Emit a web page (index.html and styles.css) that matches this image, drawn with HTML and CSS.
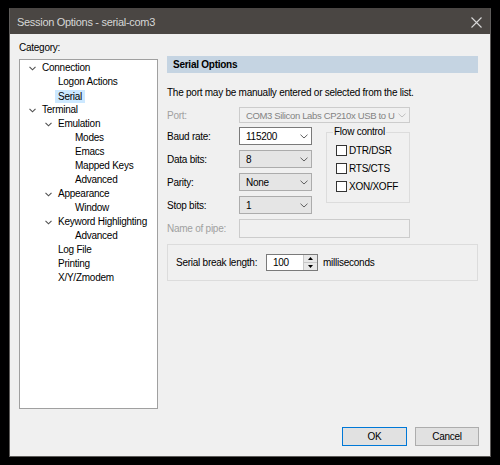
FILE: index.html
```html
<!DOCTYPE html>
<html>
<head>
<meta charset="utf-8">
<link rel="stylesheet" href="styles.css">
</head>
<body>
<div class="dialog">
  <div class="titlebar">
    <span class="title">Session Options - serial-com3</span>
    <svg class="close" width="11" height="11" viewBox="0 0 11 11"><path d="M0.5 0.5 L10.5 10.5 M10.5 0.5 L0.5 10.5" stroke="#d8d8d8" stroke-width="1.1" fill="none"/></svg>
  </div>
  <div class="client">
    <div class="main">
      <div class="left">
        <div class="cat-label">Category:</div>
        <div class="tree">
          <div class="row l0"><span class="tw"><svg width="7" height="5" viewBox="0 0 7 5"><path d="M0.5 0.8 L3.5 3.8 L6.5 0.8" stroke="#505050" stroke-width="1.1" fill="none"/></svg></span><span class="txt">Connection</span></div>
          <div class="row l1"><span class="tw"></span><span class="txt">Logon Actions</span></div>
          <div class="row l1"><span class="tw"></span><span class="txt sel">Serial</span></div>
          <div class="row l0"><span class="tw"><svg width="7" height="5" viewBox="0 0 7 5"><path d="M0.5 0.8 L3.5 3.8 L6.5 0.8" stroke="#505050" stroke-width="1.1" fill="none"/></svg></span><span class="txt">Terminal</span></div>
          <div class="row l1"><span class="tw"><svg width="7" height="5" viewBox="0 0 7 5"><path d="M0.5 0.8 L3.5 3.8 L6.5 0.8" stroke="#505050" stroke-width="1.1" fill="none"/></svg></span><span class="txt">Emulation</span></div>
          <div class="row l2"><span class="tw"></span><span class="txt">Modes</span></div>
          <div class="row l2"><span class="tw"></span><span class="txt">Emacs</span></div>
          <div class="row l2"><span class="tw"></span><span class="txt">Mapped Keys</span></div>
          <div class="row l2"><span class="tw"></span><span class="txt">Advanced</span></div>
          <div class="row l1"><span class="tw"><svg width="7" height="5" viewBox="0 0 7 5"><path d="M0.5 0.8 L3.5 3.8 L6.5 0.8" stroke="#505050" stroke-width="1.1" fill="none"/></svg></span><span class="txt">Appearance</span></div>
          <div class="row l2"><span class="tw"></span><span class="txt">Window</span></div>
          <div class="row l1"><span class="tw"><svg width="7" height="5" viewBox="0 0 7 5"><path d="M0.5 0.8 L3.5 3.8 L6.5 0.8" stroke="#505050" stroke-width="1.1" fill="none"/></svg></span><span class="txt">Keyword Highlighting</span></div>
          <div class="row l2"><span class="tw"></span><span class="txt">Advanced</span></div>
          <div class="row l1"><span class="tw"></span><span class="txt">Log File</span></div>
          <div class="row l1"><span class="tw"></span><span class="txt">Printing</span></div>
          <div class="row l1"><span class="tw"></span><span class="txt">X/Y/Zmodem</span></div>
        </div>
      </div>
      <div class="right">
        <div class="header">Serial Options</div>
        <div class="desc">The port may be manually entered or selected from the list.</div>
        <div class="frow port-row">
          <span class="flabel dis">Port:</span>
          <div class="combo disabled wide"><span class="cval">COM3 Silicon Labs CP210x USB to U</span><svg class="arrow" width="8" height="5" viewBox="0 0 8 5"><path d="M0.5 0.7 L4 4 L7.5 0.7" stroke="#c0c0c0" stroke-width="1" fill="none"/></svg></div>
        </div>
        <div class="mid">
          <div class="fields">
            <div class="frow">
              <span class="flabel">Baud rate:</span>
              <div class="combo edit"><span class="cval">115200</span><svg class="arrow" width="8" height="5" viewBox="0 0 8 5"><path d="M0.5 0.7 L4 4 L7.5 0.7" stroke="#606060" stroke-width="1" fill="none"/></svg></div>
            </div>
            <div class="frow">
              <span class="flabel">Data bits:</span>
              <div class="combo list"><span class="cval">8</span><svg class="arrow" width="8" height="5" viewBox="0 0 8 5"><path d="M0.5 0.7 L4 4 L7.5 0.7" stroke="#606060" stroke-width="1" fill="none"/></svg></div>
            </div>
            <div class="frow">
              <span class="flabel">Parity:</span>
              <div class="combo list"><span class="cval">None</span><svg class="arrow" width="8" height="5" viewBox="0 0 8 5"><path d="M0.5 0.7 L4 4 L7.5 0.7" stroke="#606060" stroke-width="1" fill="none"/></svg></div>
            </div>
            <div class="frow">
              <span class="flabel">Stop bits:</span>
              <div class="combo list"><span class="cval">1</span><svg class="arrow" width="8" height="5" viewBox="0 0 8 5"><path d="M0.5 0.7 L4 4 L7.5 0.7" stroke="#606060" stroke-width="1" fill="none"/></svg></div>
            </div>
          </div>
          <fieldset class="flow">
            <legend>Flow control</legend>
            <div class="chk"><span class="box"></span><span>DTR/DSR</span></div>
            <div class="chk"><span class="box"></span><span>RTS/CTS</span></div>
            <div class="chk"><span class="box"></span><span>XON/XOFF</span></div>
          </fieldset>
        </div>
        <div class="frow pipe-row">
          <span class="flabel dis">Name of pipe:</span>
          <div class="editbox disabled"></div>
        </div>
        <div class="break-group">
          <span class="blabel">Serial break length:</span>
          <div class="spin">
            <span class="spinval">100</span>
            <div class="spinbtns">
              <span class="sb"><svg width="5" height="3" viewBox="0 0 5 3"><path d="M0 3 L2.5 0 L5 3 Z" fill="#000"/></svg></span>
              <span class="sb"><svg width="5" height="3" viewBox="0 0 5 3"><path d="M0 0 L2.5 3 L5 0 Z" fill="#000"/></svg></span>
            </div>
          </div>
          <span class="unit">milliseconds</span>
        </div>
      </div>
    </div>
    <div class="buttons">
      <button class="btn default">OK</button>
      <button class="btn">Cancel</button>
    </div>
  </div>
</div>
</body>
</html>
```

FILE: styles.css
```css
* { box-sizing: border-box; }
html, body { margin: 0; padding: 0; background: #000; }
body {
  font-family: "Liberation Sans", Arial, sans-serif;
  font-size: 10px;
  letter-spacing: -0.25px;
  color: #000;
  width: 500px;
  height: 465px;
  overflow: hidden;
}
.dialog {
  margin: 8px 0 0 9px;
  width: 482px;
  height: 449px;
  border: 1px solid #5e5c5a;
  border-top-color: #4a4643;
  display: flex;
  flex-direction: column;
}
.titlebar {
  height: 25px;
  background: #4a4643;
  color: #d6d6d6;
  display: flex;
  align-items: center;
  justify-content: space-between;
  padding: 0 8px 0 7px;
  font-size: 11px;
  letter-spacing: -0.3px;
}
.close { margin-top: 1px; }
.client {
  flex: 1;
  background: #f0f0f0;
  display: flex;
  flex-direction: column;
}
.main {
  display: flex;
  padding: 7px 0 0 9px;
  gap: 9px;
}
.left { width: 139px; }
.cat-label { line-height: 14px; height: 14px; }
.tree {
  margin-top: 4px;
  height: 350px;
  background: #fff;
  border: 1px solid #a0a0a0;
  padding-top: 1px;
}
.row {
  display: flex;
  align-items: center;
  height: 14px;
  line-height: 14px;
  white-space: nowrap;
}
.row.l0 { padding-left: 6px; }
.row.l1 { padding-left: 22px; }
.row.l2 { padding-left: 39px; }
.tw {
  width: 16px;
  flex: none;
  display: flex;
  align-items: center;
  padding-left: 3px;
}
.txt.sel {
  background: #cce8ff;
  margin-left: -3px;
  padding: 0 3px;
  line-height: 13px;
}
.right {
  width: 311px;
  padding-top: 15px;
  display: flex;
  flex-direction: column;
}
.header {
  height: 17px;
  background: #c5d4e2;
  font-weight: bold;
  padding-left: 6px;
  line-height: 17px;
}
.desc {
  margin-top: 13px;
  line-height: 14px;
}
.frow {
  display: flex;
  align-items: center;
}
.flabel { width: 72px; flex: none; }
.dis { color: #a0a0a0; }
.port-row { margin-top: 7px; }
.combo {
  display: flex;
  align-items: center;
  justify-content: space-between;
  height: 18px;
  width: 73px;
  padding: 0 3px 0 6px;
  border: 1px solid #acacac;
}
.combo.wide {
  width: 171px;
  height: 16px;
  font-size: 9.5px;
  letter-spacing: -0.35px;
  padding-left: 6px;
}
.combo.disabled { background: #f0f0f0; border-color: #cccccc; color: #838383; }
.combo.edit { background: #fff; border-color: #7a7a7a; }
.combo.list { background: #e5e5e5; border-color: #acacac; }
.cval { white-space: nowrap; flex: 1; min-width: 0; overflow: hidden; }
.arrow { flex: none; margin-left: 2px; }
.mid {
  display: flex;
  align-items: flex-start;
  margin-top: 4px;
}
.fields {
  display: flex;
  flex-direction: column;
  gap: 5px;
}
.flow {
  margin: -2px 0 0 14px;
  width: 84px;
  height: 78px;
  padding: 2px 0 0 9px;
  border: 1px solid #dcdcdc;
  min-width: 0;
}
.flow legend {
  padding: 0 1px;
  margin-left: -3px;
  line-height: 14px;
}
.chk {
  display: flex;
  align-items: center;
  gap: 2px;
  height: 18px;
}
.box {
  width: 11px;
  height: 11px;
  border: 1px solid #333;
  background: #fff;
}
.pipe-row { margin-top: 5px; }
.editbox {
  width: 171px;
  height: 19px;
  border: 1px solid #cccccc;
}
.editbox.disabled { background: #f0f0f0; }
.break-group {
  margin-top: 6px;
  height: 37px;
  border: 1px solid #dcdcdc;
  display: flex;
  align-items: center;
  padding-left: 8px;
}
.blabel { width: 90px; }
.spin {
  display: flex;
  width: 52px;
  height: 17px;
  border: 1px solid #7a7a7a;
  background: #fff;
}
.spinval { flex: 1; padding-left: 6px; line-height: 15px; }
.spinbtns {
  width: 14px;
  display: flex;
  flex-direction: column;
  border-left: 1px solid #c8c8c8;
}
.sb {
  flex: 1;
  display: flex;
  align-items: center;
  justify-content: center;
  background: #e8e8e8;
}
.sb + .sb { border-top: 1px solid #c8c8c8; }
.unit { margin-left: 5px; }
.buttons {
  margin-top: auto;
  display: flex;
  justify-content: flex-end;
  gap: 8px;
  padding: 0 11px 10px 0;
}
.btn {
  font-family: "Liberation Sans", Arial, sans-serif;
  font-size: 10px;
  letter-spacing: -0.25px;
  height: 19px;
  width: 64px;
  background: #e1e1e1;
  border: 1px solid #adadad;
  padding: 0;
  color: #000;
}
.btn.default { width: 65px; border: 1px solid #0078d7; }
```
